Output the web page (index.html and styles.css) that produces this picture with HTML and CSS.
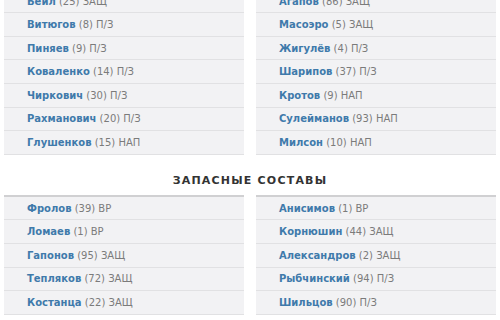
FILE: index.html
```html
<!DOCTYPE html>
<html lang="ru">
<head>
<meta charset="utf-8">
<title>Составы</title>
<link rel="stylesheet" href="styles.css">
</head>
<body>
<div class="page">
  <section class="lineups lineups-main">
    <ul class="team">
      <li class="row"><span class="name">Бейл</span> (25) ЗАЩ</li>
      <li class="row"><span class="name">Витюгов</span> (8) П/З</li>
      <li class="row"><span class="name">Пиняев</span> (9) П/З</li>
      <li class="row"><span class="name">Коваленко</span> (14) П/З</li>
      <li class="row"><span class="name">Чиркович</span> (30) П/З</li>
      <li class="row"><span class="name">Рахманович</span> (20) П/З</li>
      <li class="row"><span class="name">Глушенков</span> (15) НАП</li>
    </ul>
    <ul class="team">
      <li class="row"><span class="name">Агапов</span> (86) ЗАЩ</li>
      <li class="row"><span class="name">Масоэро</span> (5) ЗАЩ</li>
      <li class="row"><span class="name">Жигулёв</span> (4) П/З</li>
      <li class="row"><span class="name">Шарипов</span> (37) П/З</li>
      <li class="row"><span class="name">Кротов</span> (9) НАП</li>
      <li class="row"><span class="name">Сулейманов</span> (93) НАП</li>
      <li class="row"><span class="name">Милсон</span> (10) НАП</li>
    </ul>
  </section>
  <h2 class="title">Запасные составы</h2>
  <section class="lineups lineups-subs">
    <ul class="team">
      <li class="row"><span class="name">Фролов</span> (39) ВР</li>
      <li class="row"><span class="name">Ломаев</span> (1) ВР</li>
      <li class="row"><span class="name">Гапонов</span> (95) ЗАЩ</li>
      <li class="row"><span class="name">Тепляков</span> (72) ЗАЩ</li>
      <li class="row"><span class="name">Костанца</span> (22) ЗАЩ</li>
    </ul>
    <ul class="team">
      <li class="row"><span class="name">Анисимов</span> (1) ВР</li>
      <li class="row"><span class="name">Корнюшин</span> (44) ЗАЩ</li>
      <li class="row"><span class="name">Александров</span> (2) ЗАЩ</li>
      <li class="row"><span class="name">Рыбчинский</span> (94) П/З</li>
      <li class="row"><span class="name">Шильцов</span> (90) П/З</li>
    </ul>
  </section>
</div>
</body>
</html>
```
FILE: styles.css
```css
html, body {
  margin: 0;
  padding: 0;
  background: #ffffff;
  overflow: hidden;
}
body {
  font-family: "DejaVu Sans", "Liberation Sans", sans-serif;
  font-size: 10px;
  color: #7b7b7b;
}
.page {
  padding: 0 4px;
}
.lineups {
  display: grid;
  grid-template-columns: 1fr 1fr;
  column-gap: 12px;
}
.lineups-main {
  margin-top: -10.3px;
}
.team {
  list-style: none;
  margin: 0;
  padding: 0;
}
.lineups-subs .team {
  border-top: 2px solid #d0d0d2;
}
.row {
  box-sizing: border-box;
  height: 23.6px;
  display: flex;
  align-items: center;
  padding-left: 23px;
  background: #f2f2f4;
  border-bottom: 1px solid #e1e1e3;
  white-space: pre;
}
.name {
  color: #3f7aab;
  font-weight: bold;
}
.title {
  margin: 0;
  padding: 19px 0 7px;
  line-height: 14px;
  font-size: 11px;
  font-weight: bold;
  letter-spacing: 1.2px;
  text-transform: uppercase;
  text-align: center;
  color: #333333;
}
```
